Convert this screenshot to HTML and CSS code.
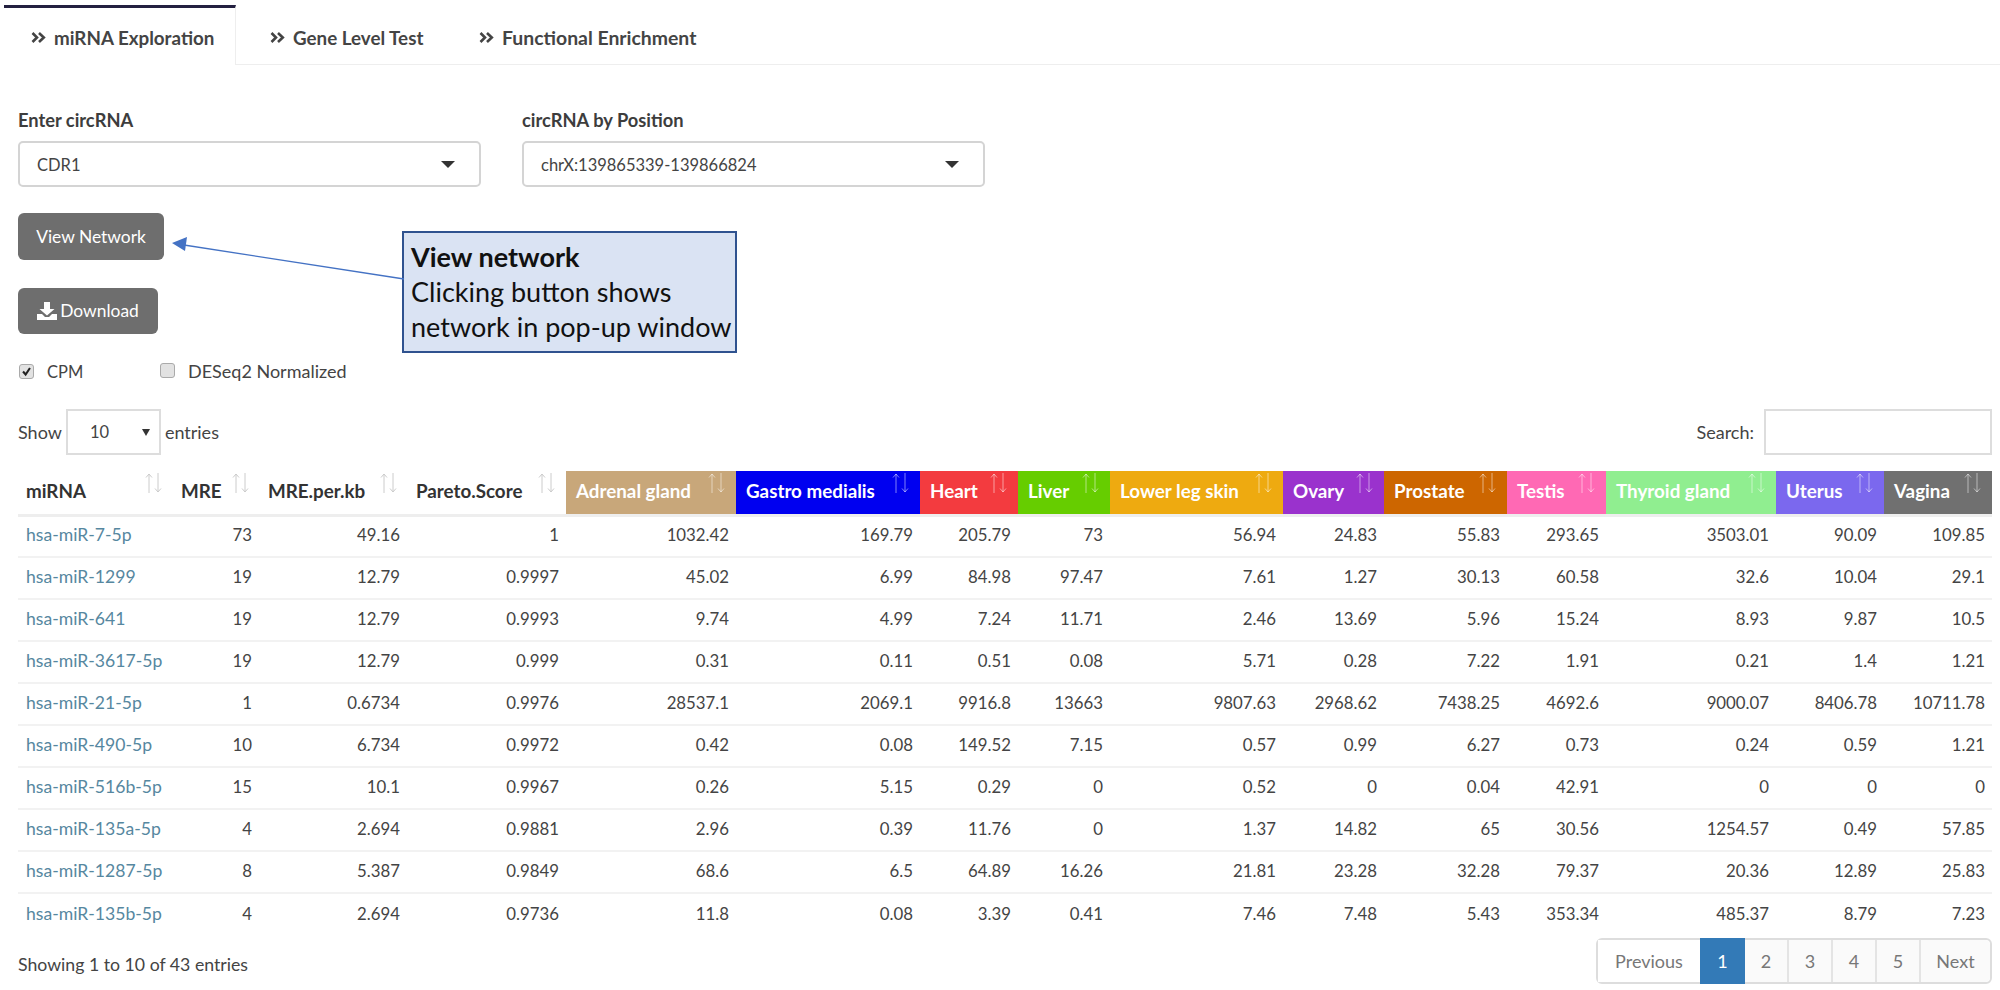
FILE: index.html
```html
<!DOCTYPE html>
<html lang="en">
<head>
<meta charset="utf-8">
<title>miRNA Exploration</title>
<link rel="stylesheet" href="styles.css">
</head>
<body>
<svg class="defs" width="0" height="0" aria-hidden="true">
  <symbol id="chev" viewBox="0 0 15 11"><path d="M1.5 1l4.5 4.5L1.5 10M8 1l4.8 4.5L8 10" fill="none" stroke="currentColor" stroke-width="2.6"/></symbol>
  <symbol id="sort" viewBox="0 0 17 20"><path d="M4 20V1M1 4.5L4 1l3 3.5M13 0v19M10 15.500L13 19l3-3.500" fill="none" stroke="currentColor" stroke-width="1"/></symbol>
</svg>
<nav class="tabs">
  <a class="tab active"><svg class="chev"><use href="#chev"/></svg>miRNA Exploration</a>
  <a class="tab"><svg class="chev"><use href="#chev"/></svg>Gene Level Test</a>
  <a class="tab"><svg class="chev"><use href="#chev"/></svg>Functional Enrichment</a>
</nav>
<main class="content">
  <div class="fields">
    <div class="field"><label class="field-label">Enter circRNA</label><div class="select"><span>CDR1</span><i class="caret"></i></div></div>
    <div class="field"><label class="field-label">circRNA by Position</label><div class="select"><span>chrX:139865339-139866824</span><i class="caret"></i></div></div>
  </div>
  <button class="btn btn-network">View Network</button>
  <button class="btn btn-download"><svg class="dl" viewBox="0 0 20 18"><path d="M7 0h6v7h4.500L10 13.500 2.500 7H7zM0 12h5l3 3h4l3-3h5v6H0z" fill="#fff"/></svg>Download</button>
  <div class="checks">
    <label class="check check-cpm"><span class="box"><svg viewBox="0 0 15 15"><path d="M3.500 7.500l3 3.500 5-7.500" fill="none" stroke="#222" stroke-width="2.400"/></svg></span>CPM</label>
    <label class="check check-deseq"><span class="box"></span>DESeq2 Normalized</label>
  </div>
  <div class="table-top">
    <div class="length">Show <div class="len-select"><span>10</span><i class="caret small"></i></div> entries</div>
    <div class="search">Search: <div class="search-input"></div></div>
  </div>
  <table class="data">
    <colgroup><col class="c1"><col class="c2"><col class="c3"><col class="c4"><col class="c5"><col class="c6"><col class="c7"><col class="c8"><col class="c9"><col class="c10"><col class="c11"><col class="c12"><col class="c13"><col class="c14"><col class="c15"></colgroup>
    <thead>
      <tr>
        <th>miRNA<svg class="sort"><use href="#sort"/></svg></th>
        <th>MRE<svg class="sort"><use href="#sort"/></svg></th>
        <th>MRE.per.kb<svg class="sort"><use href="#sort"/></svg></th>
        <th>Pareto.Score<svg class="sort"><use href="#sort"/></svg></th>
        <th class="tissue adrenal">Adrenal gland<svg class="sort"><use href="#sort"/></svg></th>
        <th class="tissue gastro">Gastro medialis<svg class="sort"><use href="#sort"/></svg></th>
        <th class="tissue heart">Heart<svg class="sort"><use href="#sort"/></svg></th>
        <th class="tissue liver">Liver<svg class="sort"><use href="#sort"/></svg></th>
        <th class="tissue leg">Lower leg skin<svg class="sort"><use href="#sort"/></svg></th>
        <th class="tissue ovary">Ovary<svg class="sort"><use href="#sort"/></svg></th>
        <th class="tissue prostate">Prostate<svg class="sort"><use href="#sort"/></svg></th>
        <th class="tissue testis">Testis<svg class="sort"><use href="#sort"/></svg></th>
        <th class="tissue thyroid">Thyroid gland<svg class="sort"><use href="#sort"/></svg></th>
        <th class="tissue uterus">Uterus<svg class="sort"><use href="#sort"/></svg></th>
        <th class="tissue vagina">Vagina<svg class="sort"><use href="#sort"/></svg></th>
      </tr>
    </thead>
    <tbody>
      <tr><td><a>hsa-miR-7-5p</a></td><td>73</td><td>49.16</td><td>1</td><td>1032.42</td><td>169.79</td><td>205.79</td><td>73</td><td>56.94</td><td>24.83</td><td>55.83</td><td>293.65</td><td>3503.01</td><td>90.09</td><td>109.85</td></tr>
      <tr><td><a>hsa-miR-1299</a></td><td>19</td><td>12.79</td><td>0.9997</td><td>45.02</td><td>6.99</td><td>84.98</td><td>97.47</td><td>7.61</td><td>1.27</td><td>30.13</td><td>60.58</td><td>32.6</td><td>10.04</td><td>29.1</td></tr>
      <tr><td><a>hsa-miR-641</a></td><td>19</td><td>12.79</td><td>0.9993</td><td>9.74</td><td>4.99</td><td>7.24</td><td>11.71</td><td>2.46</td><td>13.69</td><td>5.96</td><td>15.24</td><td>8.93</td><td>9.87</td><td>10.5</td></tr>
      <tr><td><a>hsa-miR-3617-5p</a></td><td>19</td><td>12.79</td><td>0.999</td><td>0.31</td><td>0.11</td><td>0.51</td><td>0.08</td><td>5.71</td><td>0.28</td><td>7.22</td><td>1.91</td><td>0.21</td><td>1.4</td><td>1.21</td></tr>
      <tr><td><a>hsa-miR-21-5p</a></td><td>1</td><td>0.6734</td><td>0.9976</td><td>28537.1</td><td>2069.1</td><td>9916.8</td><td>13663</td><td>9807.63</td><td>2968.62</td><td>7438.25</td><td>4692.6</td><td>9000.07</td><td>8406.78</td><td>10711.78</td></tr>
      <tr><td><a>hsa-miR-490-5p</a></td><td>10</td><td>6.734</td><td>0.9972</td><td>0.42</td><td>0.08</td><td>149.52</td><td>7.15</td><td>0.57</td><td>0.99</td><td>6.27</td><td>0.73</td><td>0.24</td><td>0.59</td><td>1.21</td></tr>
      <tr><td><a>hsa-miR-516b-5p</a></td><td>15</td><td>10.1</td><td>0.9967</td><td>0.26</td><td>5.15</td><td>0.29</td><td>0</td><td>0.52</td><td>0</td><td>0.04</td><td>42.91</td><td>0</td><td>0</td><td>0</td></tr>
      <tr><td><a>hsa-miR-135a-5p</a></td><td>4</td><td>2.694</td><td>0.9881</td><td>2.96</td><td>0.39</td><td>11.76</td><td>0</td><td>1.37</td><td>14.82</td><td>65</td><td>30.56</td><td>1254.57</td><td>0.49</td><td>57.85</td></tr>
      <tr><td><a>hsa-miR-1287-5p</a></td><td>8</td><td>5.387</td><td>0.9849</td><td>68.6</td><td>6.5</td><td>64.89</td><td>16.26</td><td>21.81</td><td>23.28</td><td>32.28</td><td>79.37</td><td>20.36</td><td>12.89</td><td>25.83</td></tr>
      <tr><td><a>hsa-miR-135b-5p</a></td><td>4</td><td>2.694</td><td>0.9736</td><td>11.8</td><td>0.08</td><td>3.39</td><td>0.41</td><td>7.46</td><td>7.48</td><td>5.43</td><td>353.34</td><td>485.37</td><td>8.79</td><td>7.23</td></tr>
    </tbody>
  </table>
  <div class="table-bottom">
    <div class="info">Showing 1 to 10 of 43 entries</div>
    <div class="pager">
      <a class="pg prev">Previous</a><a class="pg current">1</a><a class="pg num">2</a><a class="pg num">3</a><a class="pg num">4</a><a class="pg num">5</a><a class="pg next">Next</a>
    </div>
  </div>
</main>
<aside class="callout">
  <strong>View network</strong>
  <span>Clicking button shows</span>
  <span>network in pop-up window</span>
</aside>
<svg class="callout-arrow" viewBox="0 0 240 50" aria-hidden="true"><path d="M232 45L12 11" stroke="#4472c4" stroke-width="1.300" fill="none"/><path d="M0 9l15-6-2 14z" fill="#4472c4"/></svg>
</body>
</html>
```
FILE: styles.css
```css
* { box-sizing: border-box; }
html, body { margin: 0; padding: 0; height: 990px; overflow: hidden; }
body { position: relative; background: #fff; color: #444; font-family: "Lato", "Open Sans", sans-serif; font-size: 18px; line-height: 22px; }
.defs { position: absolute; }

.tabs { display: flex; height: 60px; margin: 5px 0 0 4px; border-bottom: 1px solid #eee; font-size: 18.800px; font-weight: 700; color: #444; }
.tab { display: flex; align-items: center; height: 60px; padding: 2px 0 0 27px; border-top: 3px solid transparent; }
.tab:last-child { font-size: 19.400px; padding-left: 28px; }
.tab.active { width: 232px; height: 60px; border-top-color: #232040; border-right: 1px solid #eee; background: #fff; }
.tab:nth-child(2) { width: 215px; padding-left: 34px; }
.chev { width: 15px; height: 11px; margin-right: 8px; }

.content { padding: 44px 8px 0 18px; }
.fields { display: flex; gap: 41px; }
.field { width: 463px; }
.field-label { display: block; font-weight: 700; color: #3d3d3d; font-size: 18.300px; }
.select { display: flex; align-items: center; justify-content: space-between; height: 46px; margin-top: 10px; padding: 1px 24px 0 17px; border: 2px solid #d4d4d4; border-radius: 5px; color: #444; font-size: 16.500px; }
.caret { width: 0; height: 0; border-left: 7px solid transparent; border-right: 7px solid transparent; border-top: 7px solid #333; }
.caret.small { border-left-width: 4px; border-right-width: 4px; border-top-width: 7px; }

.btn { display: block; height: 47px; border: 0; border-radius: 6px; background: #6e6e6e; color: #fff; font: inherit; font-size: 17.400px; padding: 0; }
.btn-network { width: 146px; margin-top: 26px; }
.btn-download { display: flex; align-items: center; justify-content: center; width: 140px; height: 46px; margin-top: 28px; }
.dl { width: 20px; height: 18px; margin-right: 3px; }

.checks { display: flex; height: 20px; margin-top: 27px; font-size: 18px; }
.check { display: flex; align-items: center; }
.check-cpm { width: 142px; margin-top: 1px; padding-left: 1px; font-size: 16.500px; }
.check-deseq { margin-top: -1px; }
.box { display: block; width: 15px; height: 15px; margin-right: 13px; border: 1px solid #aaa; border-radius: 3px; background: #e2e2e2; }
.box svg { display: block; width: 13px; height: 13px; }

.table-top { display: flex; justify-content: space-between; align-items: center; height: 46px; margin-top: 28px; }
.length, .search { display: flex; align-items: center; gap: 4px; }
.len-select { display: flex; align-items: center; justify-content: space-between; width: 95px; height: 46px; padding: 0 9px 0 22px; border: 2px solid #ddd; font-size: 16.500px; }
.search { gap: 10px; }
.search-input { width: 228px; height: 46px; border: 2px solid #ddd; }

.data { width: 1974px; margin-top: 16px; border-collapse: collapse; table-layout: fixed; }
.c1 { width: 155px; } .c2 { width: 87px; } .c3 { width: 148px; } .c4 { width: 158px; } .c5 { width: 170px; }
.c6 { width: 184px; } .c7 { width: 98px; } .c8 { width: 92px; } .c9 { width: 173px; } .c10 { width: 101px; }
.c11 { width: 123px; } .c12 { width: 99px; } .c13 { width: 170px; } .c14 { width: 108px; } .c15 { width: 108px; }
.data th { position: relative; height: 44px; padding: 0 0 3px 8px; border-bottom: 3px solid #eee; text-align: left; font-weight: 700; color: #333; font-size: 18.800px; white-space: nowrap; }
.data th.tissue { padding-left: 10px; color: #fff; background-clip: padding-box; }
.sort { position: absolute; top: 2px; right: 11px; width: 17px; height: 20px; color: #ccc; }
.tissue .sort { color: rgba(255,255,255,.5); }
.data td { height: 42px; padding: 0 7px 2px 8px; border-bottom: 2px solid #f2f2f2; text-align: right; font-size: 16.800px; color: #444; white-space: nowrap; }
.data td:nth-child(2), .data td:nth-child(3) { padding-right: 8px; }
.data tbody tr:last-child td { border-bottom: 0; }
.data td:first-child { text-align: left; font-size: 17.600px; }
.data td a { color: #5687a0; }
.adrenal { background: #c8a77a; } .gastro { background: #0000f0; } .heart { background: #f33b3f; }
.liver { background: #66cd00; } .leg { background: #eeaa10; } .ovary { background: #9a32cd; }
.prostate { background: #cd6600; } .testis { background: #ff69b4; } .thyroid { background: #90ee90; }
.uterus { background: #7b68ee; } .vagina { background: #707070; }

.table-bottom { display: flex; justify-content: space-between; align-items: flex-end; margin-top: 3px; }
.info { margin-bottom: 8px; color: #444; font-size: 17.700px; }
.pager { display: flex; height: 46px; border: 2px solid #ddd; border-radius: 6px; color: #777; font-size: 18px; }
.pg { display: flex; align-items: center; justify-content: center; height: 100%; border-right: 2px solid #e4e4e4; background: #fafafa; }
.prev { width: 102px; background: #fff; border-right: 0; }
.current { width: 45px; margin: -2px 0; height: 46px; background: #337ab7; color: #fff; border-right: 0; }
.num { width: 44px; }
.next { width: 69px; border-right: 0; border-radius: 0 5px 5px 0; }

.callout { position: absolute; left: 402px; top: 231px; display: flex; flex-direction: column; justify-content: center; width: 335px; height: 122px; padding: 0 0 2px 7px; border: 2px solid #2f528f; background: #dae3f3; color: #111; font-family: "Lato", sans-serif; font-size: 27px; line-height: 35px; white-space: nowrap; }
.callout strong { font-weight: 700; }
.callout-arrow { position: absolute; left: 172px; top: 234px; width: 240px; height: 50px; }
```
